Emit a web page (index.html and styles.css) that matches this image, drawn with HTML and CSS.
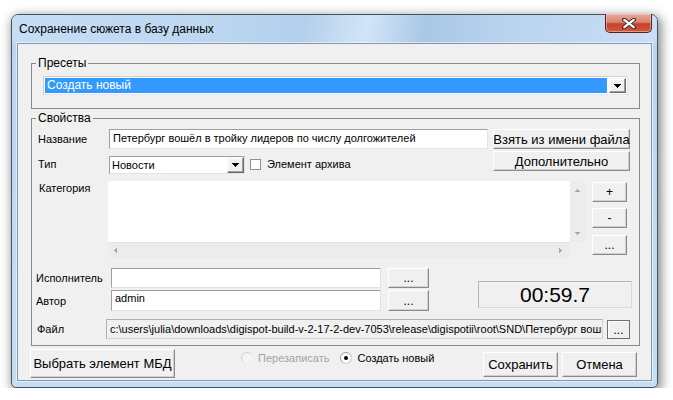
FILE: index.html
```html
<!DOCTYPE html>
<html lang="ru">
<head>
<meta charset="utf-8">
<title>Сохранение сюжета в базу данных</title>
<link rel="stylesheet" href="styles.css">
</head>
<body>
<div class="window">
  <div class="titlebar">
    <span class="title">Сохранение сюжета в базу данных</span>
    <div class="close">
      <svg width="14" height="11" viewBox="0 0 14 11"><path d="M2 1.5L12 9.5M12 1.5L2 9.5" stroke="#3a2a28" stroke-width="4" stroke-linecap="round"/><path d="M2.3 1.8L11.7 9.2M11.7 1.8L2.3 9.2" stroke="#fff" stroke-width="2.2" stroke-linecap="round"/></svg>
    </div>
  </div>
  <div class="client">
    <div class="group presets">
      <span class="legend">Пресеты</span>
      <div class="combo-sel">
        <div class="sel">Создать новый</div>
        <div class="dd btn3d"><svg width="7" height="4" viewBox="0 0 7 4"><path d="M0 0h7v1H0zM1 1h5v1H1zM2 2h3v1H2zM3 3h1v1H3z" fill="#000"/></svg></div>
      </div>
    </div>

    <div class="group props">
      <span class="legend">Свойства</span>

      <div class="row r1">
        <span class="lbl">Название</span>
        <div class="field f-name">Петербург вошёл в тройку лидеров по числу долгожителей</div>
        <div class="btn bigbtn">Взять из имени файла</div>
      </div>

      <div class="row r2">
        <span class="lbl lbl-c">Тип</span>
        <div class="combo-type">
          <span class="ct-text">Новости</span>
          <div class="dd2 btn3d"><svg width="7" height="4" viewBox="0 0 7 4"><path d="M0 0h7v1H0zM1 1h5v1H1zM2 2h3v1H2zM3 3h1v1H3z" fill="#000"/></svg></div>
        </div>
        <span class="check"></span>
        <span class="check-text">Элемент архива</span>
        <div class="btn bigbtn btn-more">Дополнительно</div>
      </div>

      <div class="row r3">
        <span class="lbl lbl-cat">Категория</span>
        <div class="listbox">
          <div class="lb-area"></div>
          <div class="vscroll">
            <svg width="5" height="3" viewBox="0 0 5 3"><path d="M2 0h1v1H2zM1 1h3v1H1zM0 2h5v1H0z" fill="#a6a6a6"/></svg>
            <svg width="5" height="3" viewBox="0 0 5 3"><path d="M0 0h5v1H0zM1 1h3v1H1zM2 2h1v1H2z" fill="#a6a6a6"/></svg>
          </div>
          <div class="hscroll">
            <svg width="3" height="5" viewBox="0 0 3 5"><path d="M2 0h1v5H2zM1 1h1v3H1zM0 2h1v1H0z" fill="#a6a6a6"/></svg>
            <svg width="3" height="5" viewBox="0 0 3 5"><path d="M0 0h1v5H0zM1 1h1v3H1zM2 2h1v1H2z" fill="#a6a6a6"/></svg>
          </div>
          <div class="corner"></div>
        </div>
        <div class="sidebtns">
          <div class="btn small">+</div>
          <div class="btn small">-</div>
          <div class="btn small">...</div>
        </div>
      </div>

      <div class="row r45">
        <div class="lc">
          <div class="subrow sr1">
            <span class="lbl2">Исполнитель</span>
            <div class="field f-short"></div>
            <div class="btn dots">...</div>
          </div>
          <div class="subrow sr2">
            <span class="lbl2">Автор</span>
            <div class="field f-short f-author">admin</div>
            <div class="btn dots">...</div>
          </div>
        </div>
        <div class="timebox">00:59.7</div>
      </div>

      <div class="row r6">
        <span class="lbl3">Файл</span>
        <div class="path">c:\users\julia\downloads\digispot-build-v-2-17-2-dev-7053\release\digispotii\root\SND\Петербург вош</div>
        <div class="btn fbtn">...</div>
      </div>
    </div>

    <div class="bottom">
      <div class="btn selbtn">Выбрать элемент МБД</div>
      <div class="radios">
        <span class="radio">
          <svg width="12" height="12" viewBox="0 0 12 12"><circle cx="6" cy="6" r="5.5" fill="#f4f4f4" stroke="#cfcfcf"/><path d="M2.1 9.9A5.5 5.5 0 0 0 9.9 2.1" fill="none" stroke="#fafafa"/></svg>
          <span class="rtext disabled">Перезаписать</span>
        </span>
        <span class="radio r-new">
          <svg width="12" height="12" viewBox="0 0 12 12"><circle cx="6" cy="6" r="5.5" fill="#fff" stroke="#9a9a9a"/><path d="M2.1 9.9A5.5 5.5 0 0 0 9.9 2.1" fill="none" stroke="#e2e2e2"/><circle cx="6" cy="6" r="2" fill="#000"/></svg>
          <span class="rtext">Создать новый</span>
        </span>
      </div>
      <div class="actions">
        <div class="btn act">Сохранить</div>
        <div class="btn act">Отмена</div>
      </div>
    </div>
  </div>
</div>
</body>
</html>
```

FILE: styles.css
```css
* { box-sizing: border-box; }

body {
  margin: 0;
  background: #fff;
  font-family: "Liberation Sans", Arial, sans-serif;
  font-size: 11px;
  color: #000;
}

.window {
  margin: 14px 0 0 11px;
  width: 647px;
  height: 374px;
  border: 1px solid #44525f;
  border-radius: 7px 7px 5px 5px;
  background: linear-gradient(to bottom, #bcd5ef, #c6ddf4);
  box-shadow: 2px 3px 11px 1px rgba(0, 0, 0, 0.5);
  display: flex;
  flex-direction: column;
}

.titlebar {
  height: 28px;
  display: flex;
  align-items: flex-start;
  justify-content: space-between;
  border-radius: 6px 6px 0 0;
  background: linear-gradient(100deg, #c6ddf5 0%, #bed8f1 28%, #b3cfec 45%, #d2e5f7 55%, #a9c7e6 64%, #b9d3ee 76%, #c9def4 100%);
}

.title {
  font-size: 12px;
  line-height: 15px;
  margin: 7px 0 0 7px;
  color: #000;
}

.close {
  width: 47px;
  height: 19px;
  margin: -1px 5px 0 0;
  border: 1px solid #5b2219;
  border-top: none;
  border-radius: 0 0 5px 5px;
  background: linear-gradient(to bottom, #e7a899 0%, #d98472 45%, #c6412c 55%, #cf5a3c 100%);
  box-shadow: inset 0 0 0 1px rgba(255, 210, 200, 0.5);
  display: flex;
  align-items: center;
  justify-content: center;
}

.client {
  margin: 0 5px;
  height: 338px;
  border: 1px solid #8196ad;
  background: #f0f0f0;
  box-shadow: 0 0 0 1px rgba(255, 255, 255, 0.55);
}

.group {
  position: relative;
  border: 1px solid #888;
  margin-left: 13px;
  width: 609px;
}

.legend {
  position: absolute;
  top: -8px;
  left: 4px;
  padding: 0 2px;
  background: #f0f0f0;
  font-size: 12px;
  line-height: 14px;
}

.presets {
  margin-top: 19px;
  height: 46px;
}

.combo-sel {
  margin: 12px 0 0 11px;
  width: 585px;
  height: 19px;
  display: flex;
  border: 1px solid;
  border-color: #d0d0d0 #e6e6e6 #e6e6e6 #d0d0d0;
  background: #fff;
  padding: 1px;
}

.sel {
  flex: 1;
  background: #3399ff;
  color: #fff;
  font-size: 12px;
  line-height: 15px;
  padding-left: 2px;
}

.btn3d {
  background: #f0f0f0;
  border: 1px solid;
  border-color: #f4f4f4 #696969 #696969 #f4f4f4;
  box-shadow: inset -1px -1px #a0a0a0, inset 1px 1px #fff;
  display: flex;
  align-items: center;
  justify-content: center;
}

.dd {
  width: 17px;
  margin-left: 2px;
}

.props {
  margin-top: 9px;
  height: 228px;
  padding: 0 9px 0 6px;
}

.row { display: flex; }

.lbl {
  width: 71px;
  flex: none;
  line-height: 14px;
}

.field {
  background: #fff;
  border: 1px solid;
  border-color: #a0a0a0 #e3e3e3 #e3e3e3 #a0a0a0;
  padding-left: 3px;
  line-height: 16px;
  white-space: nowrap;
  overflow: hidden;
}

.btn {
  background: #f0f0f0;
  border: 1px solid;
  border-color: #fff #8a8a8a #8a8a8a #fff;
  box-shadow: inset -1px -1px #d0d0d0;
  display: flex;
  align-items: center;
  justify-content: center;
  white-space: nowrap;
}

.r1 {
  margin-top: 10px;
  height: 20px;
  align-items: center;
}

.f-name {
  width: 379px;
  height: 20px;
  line-height: 17px;
}

.bigbtn {
  width: 137px;
  height: 20px;
  margin-left: 5px;
  font-size: 13px;
}

.r2 {
  margin-top: 2px;
  height: 23px;
}

.lbl-c { align-self: center; padding-top: 2px; }

.combo-type {
  width: 136px;
  height: 18px;
  margin-top: 5px;
  display: flex;
  background: #fff;
  border: 1px solid;
  border-color: #a0a0a0 #e3e3e3 #e3e3e3 #a0a0a0;
}

.ct-text {
  flex: 1;
  padding-left: 2px;
  line-height: 16px;
}

.dd2 { width: 17px; }

.check {
  width: 11px;
  height: 11px;
  margin: 8px 0 0 5px;
  border: 1px solid #8e8f8f;
  background: #fff;
}

.check-text {
  margin: 6px 0 0 6px;
  line-height: 14px;
}

.btn-more { margin-left: auto; }

.r3 {
  margin-top: 7px;
  height: 77px;
}

.lbl-cat {
  width: 70px;
  padding-left: 1px;
}

.listbox {
  width: 477px;
  height: 77px;
  display: grid;
  grid-template-columns: 1fr 15px;
  grid-template-rows: 1fr 16px;
  background: #fff;
}

.lb-area { background: #fff; }

.vscroll {
  background: #ececec;
  display: flex;
  flex-direction: column;
  justify-content: space-between;
  align-items: center;
  padding: 8px 0 7px;
}

.hscroll {
  background: #ececec;
  border-top: 1px solid #e2e2e2;
  display: flex;
  justify-content: space-between;
  align-items: center;
  padding: 0 8px 0 6px;
}

.corner { background: #f0f0f0; }

.sidebtns {
  width: 35px;
  margin-left: 7px;
  display: flex;
  flex-direction: column;
}

.small {
  height: 20px;
  font-size: 12px;
}

.small:first-child { margin-top: 1px; }
.small:nth-child(2) { margin-top: 6px; }
.small:nth-child(3) { margin-top: 7px; }

.r45 {
  margin-top: 10px;
  height: 43px;
  margin-left: -2px;
}

.lc {
  display: flex;
  flex-direction: column;
  gap: 2px;
}

.subrow {
  display: flex;
  align-items: center;
}

.lbl2 {
  width: 75px;
  line-height: 14px;
}

.f-short {
  width: 270px;
}

.sr1 .f-short, .sr1 .dots { height: 20px; }
.sr2 .f-short, .sr2 .dots { height: 21px; }

.f-author { line-height: 14px; }

.dots {
  width: 41px;
  margin-left: 7px;
  font-size: 12px;
}

.timebox {
  width: 154px;
  height: 27px;
  margin: 13px 0 0 49px;
  flex: none;
  border: 1px solid;
  border-color: #b4b4b4 #d8d8d8 #d8d8d8 #b4b4b4;
  font-size: 21px;
  line-height: 25px;
  text-align: center;
}

.r6 {
  margin-top: 8px;
  height: 20px;
  margin-left: -1px;
}

.lbl3 {
  width: 69px;
  line-height: 20px;
}

.path {
  width: 497px;
  height: 20px;
  background: #f0f0f0;
  border: 1px solid;
  border-color: #b0b0b0 #d4d4d4 #d4d4d4 #b0b0b0;
  padding-left: 3px;
  line-height: 18px;
  white-space: nowrap;
  overflow: hidden;
}

.fbtn {
  width: 23px;
  height: 19px;
  margin: 1px 0 0 4px;
  border: 1px solid #707070;
  box-shadow: inset 1px 1px #fff;
  font-size: 12px;
}

.bottom {
  display: flex;
  margin-top: 3px;
  padding: 0 14px 0 12px;
  height: 29px;
}

.selbtn {
  width: 145px;
  height: 29px;
  font-size: 13px;
}

.radios {
  display: flex;
  align-items: center;
  margin: 3px 0 0 66px;
  height: 12px;
}

.radio {
  display: flex;
  align-items: center;
}

.rtext {
  margin-left: 5px;
  line-height: 12px;
}

.disabled { color: #a3a3a3; }

.r-new { margin-left: 11px; }

.actions {
  display: flex;
  margin-left: auto;
  margin-top: 3px;
}

.act {
  width: 75px;
  height: 25px;
  font-size: 13px;
}

.act + .act { margin-left: 4px; }
```
